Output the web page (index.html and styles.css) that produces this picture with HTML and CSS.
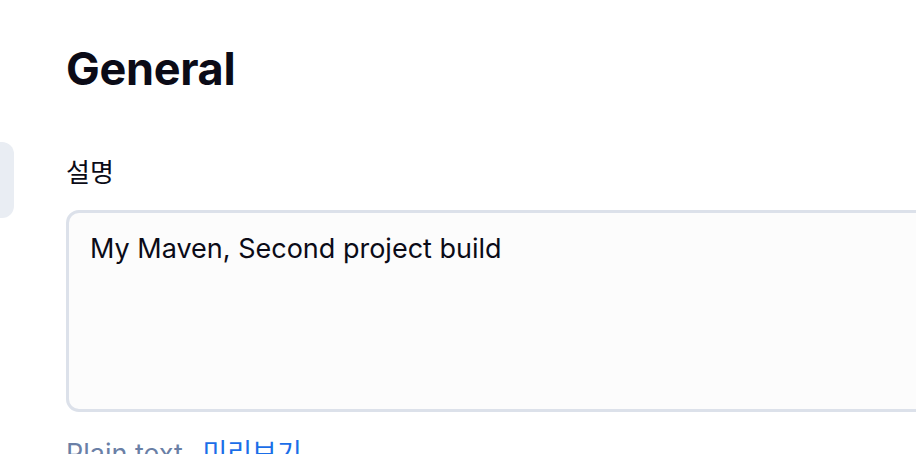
FILE: index.html
```html
<!DOCTYPE html>
<html lang="ko">
<head>
    <meta charset="UTF-8">
    <meta name="viewport" content="width=device-width, initial-scale=1.0">
    <title>General</title>
    <link rel="stylesheet" href="styles.css">
</head>
<body>
    <div class="page">
        <div class="side">
            <div class="side-item"></div>
        </div>
        <div class="content">
            <h1 class="section-title">General</h1>
            <div class="field">
                <div class="field-label">설명</div>
                <textarea class="field-input" name="description">My Maven, Second project build</textarea>
                <div class="field-hint">
                    <span class="hint-plain">Plain text</span>
                    <a href="#" class="hint-link">미리보기</a>
                </div>
            </div>
        </div>
    </div>
</body>
</html>
```

FILE: styles.css
```css
body {
    margin: 0;
    background-color: #ffffff;
    font-family: Inter, "Noto Sans CJK KR", sans-serif;
    color: #0b0b17;
    overflow: hidden;
}

.page {
    display: flex;
    height: 454px;
}

/* the nav column is cut off at the left edge */
.side {
    width: 14px;
    flex-shrink: 0;
    padding-top: 142px;
}

.side-item {
    height: 76px;
    background-color: #e9edf3;
    border-radius: 0 12px 12px 0;
}

.content {
    flex: 1;
    padding-left: 52px;
    padding-top: 42px;
    min-width: 0;
}

.section-title {
    margin: 0 0 60px 0;
    font-size: 45px;
    font-weight: 700;
    line-height: 1.2;
    letter-spacing: -0.3px;
    color: #0b0b17;
}

.field-label {
    font-size: 26px;
    line-height: 34px;
    margin-bottom: 20px;
}

.field-input {
    display: block;
    box-sizing: border-box;
    width: 900px;
    height: 202px;
    padding: 19px 21px;
    border: 3px solid #dce1ea;
    border-radius: 13px;
    background-color: #fcfcfc;
    font-family: Inter, "Noto Sans CJK KR", sans-serif;
    font-size: 27px;
    color: #0b0b17;
    resize: none;
}

.field-hint {
    margin-top: 20px;
    font-size: 27px;
}

.hint-plain {
    color: #6a7fa6;
}

.hint-link {
    color: #1b6ee8;
    text-decoration: none;
    margin-left: 12px;
}
```
